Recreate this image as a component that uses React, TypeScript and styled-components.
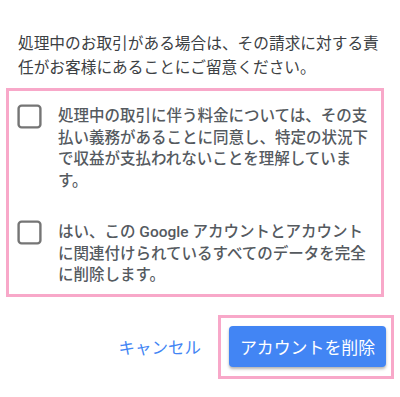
import React from 'react';
import styled, { createGlobalStyle } from 'styled-components';

// Dialog de exclusao de conta (confirmacao)

const GlobalStyle = createGlobalStyle`
  html, body {
    margin: 0;
    padding: 0;
    background: #ffffff;
  }
  body {
    font-family: Roboto, "Noto Sans CJK JP", "Noto Sans", sans-serif;
    -webkit-font-smoothing: antialiased;
  }
`;

const Page = styled.div`
  width: 400px;
  height: 397px;
  box-sizing: border-box;
  padding-top: 32px;
  display: flex;
  flex-direction: column;
`;

const Intro = styled.p`
  margin: 0 0 9px 18px;
  width: 366px;
  font-size: 15.7px;
  line-height: 23.5px;
  color: #3c4043;
`;

const Highlight = styled.div<{ $pad: string }>`
  border: 3px solid #f8a8c9;
  padding: ${(p) => p.$pad};
  box-sizing: border-box;
`;

const ChecksBox = styled(Highlight)`
  margin-left: 6px;
  width: 378px;
  display: flex;
  flex-direction: column;
  gap: 29px;
`;

const CheckRow = styled.label`
  display: flex;
  align-items: flex-start;
  gap: 16px;
  cursor: pointer;
`;

const Box = styled.svg`
  flex-shrink: 0;
  width: 25px;
  height: 25px;
  margin-top: -2px;
`;

const CheckText = styled.span`
  width: 318px;
  font-size: 15.5px;
  line-height: 21.7px;
  font-weight: 500;
  color: #555a5f;
`;

const Footer = styled.div`
  margin-top: 18px;
  padding-right: 6px;
  display: flex;
  justify-content: flex-end;
  align-items: center;
  gap: 9px;
`;

const TextButton = styled.button`
  background: none;
  border: none;
  padding: 8px;
  font-family: inherit;
  font-size: 16.5px;
  color: #4285f4;
  cursor: pointer;
`;

const PrimaryButton = styled.button`
  width: 157px;
  height: 41px;
  background: #4285f4;
  color: #ffffff;
  border: none;
  border-radius: 4px;
  box-shadow: 0 2px 3px rgba(0, 0, 0, 0.3);
  font-family: inherit;
  font-size: 16.9px;
  padding: 0;
  cursor: pointer;
`;

const Checkbox: React.FC = () => (
  <Box viewBox="0 0 25 25">
    <rect x="1.6" y="1.6" width="21.8" height="21.8" rx="3" fill="none" stroke="#757575" strokeWidth="2.4" />
  </Box>
);

const items = [
  '処理中の取引に伴う料金については、その支払い義務があることに同意し、特定の状況下で収益が支払われないことを理解しています。',
  'はい、この Google アカウントとアカウントに関連付けられているすべてのデータを完全に削除します。',
];

const App: React.FC = () => (
  <>
    <GlobalStyle />
    <Page>
      <Intro>処理中のお取引がある場合は、その請求に対する責任がお客様にあることにご留意ください。</Intro>
      <ChecksBox $pad="15px 8px 7px 8px">
        {items.map((t) => (
          <CheckRow key={t}>
            <Checkbox />
            <CheckText>{t}</CheckText>
          </CheckRow>
        ))}
      </ChecksBox>
      <Footer>
        <TextButton>キャンセル</TextButton>
        <Highlight $pad="8px 5px 9px 8px">
          <PrimaryButton>アカウントを削除</PrimaryButton>
        </Highlight>
      </Footer>
    </Page>
  </>
);

export default App;
